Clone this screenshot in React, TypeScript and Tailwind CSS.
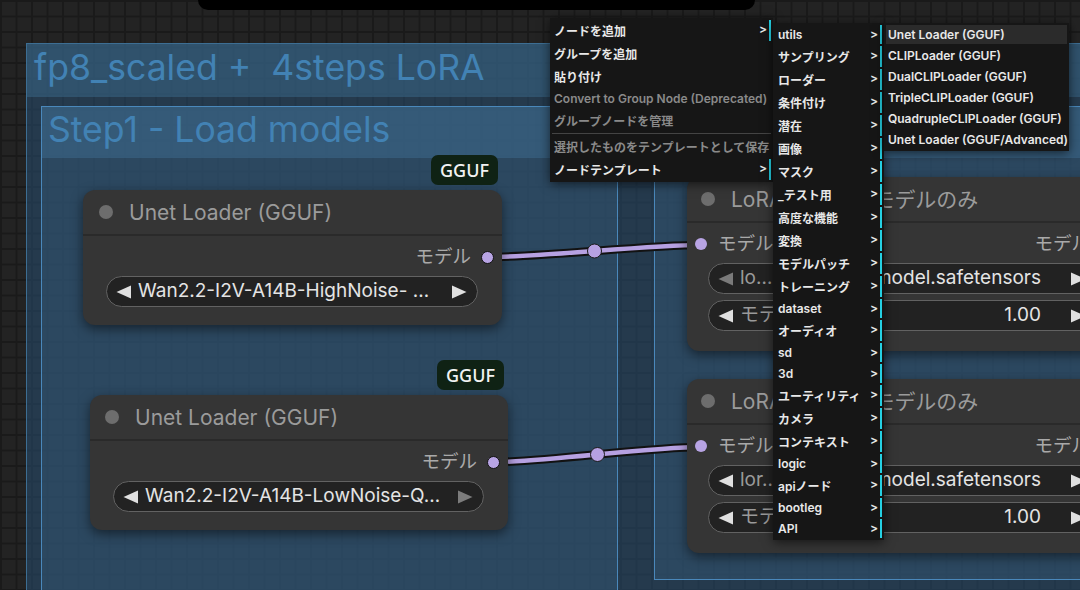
import React from "react";

const FONT = "[font-family:Inter,'Noto_Sans_CJK_JP',sans-serif]";

function Tri({ dir, color }: { dir: "l" | "r"; color: string }) {
  return (
    <svg width="15" height="14" viewBox="0 0 15 14" className="block shrink-0">
      <polygon
        points={dir === "l" ? "15,0.5 15,13.5 0.5,7" : "0,0.5 0,13.5 14.5,7"}
        fill={color}
      />
    </svg>
  );
}

function Node({
  pos,
  titleCls,
  title,
  children,
}: {
  pos: string;
  titleCls: string;
  title: string;
  children: React.ReactNode;
}) {
  return (
    <div
      className={`absolute ${pos} rounded-[12px] bg-[#353535] shadow-[0_4px_12px_rgba(0,0,0,0.5)]`}
    >
      <div
        className={`flex h-[46px] items-center border-b-2 border-[#2a2a2a] ${titleCls}`}
      >
        <div className="h-[14px] w-[14px] shrink-0 rounded-full bg-[#6d6d6d]" />
        <div className="ml-[16px] whitespace-nowrap text-[21px] leading-none text-[#9b9b9b]">
          {title}
        </div>
      </div>
      {children}
    </div>
  );
}

function Badge({ pos }: { pos: string }) {
  return (
    <div
      className={`absolute ${pos} flex h-[30px] w-[67px] items-center justify-center rounded-[7px] bg-[#0f2214] [font-family:'Noto_Sans',sans-serif] text-[18px] font-medium text-[#f2f2f2]`}
    >
      GGUF
    </div>
  );
}

function Entry({
  text,
  sub,
  disabled,
  hl,
  pl,
}: {
  text: string;
  sub?: boolean;
  disabled?: boolean;
  hl?: boolean;
  pl: string;
}) {
  return (
    <div
      className={`relative m-[2px] py-[2px] ${pl} whitespace-nowrap leading-[normal] ${
        disabled ? "text-[#8a8a8a]" : "text-[#e8e8e8]"
      } ${sub ? "border-r-2 border-[#25d0e3]" : ""} ${hl ? "bg-[#2b2b2b]" : ""}`}
    >
      {text}
      {sub && (
        <span className="absolute right-[2px] top-px leading-[normal] text-[#e8e8e8]">
          &gt;
        </span>
      )}
    </div>
  );
}

const categories: string[] = [
  "utils",
  "サンプリング",
  "ローダー",
  "条件付け",
  "潜在",
  "画像",
  "マスク",
  "_テスト用",
  "高度な機能",
  "変換",
  "モデルパッチ",
  "トレーニング",
  "dataset",
  "オーディオ",
  "sd",
  "3d",
  "ユーティリティ",
  "カメラ",
  "コンテキスト",
  "logic",
  "apiノード",
  "bootleg",
  "API",
];

const loaders = [
  "Unet Loader (GGUF)",
  "CLIPLoader (GGUF)",
  "DualCLIPLoader (GGUF)",
  "TripleCLIPLoader (GGUF)",
  "QuadrupleCLIPLoader (GGUF)",
  "Unet Loader (GGUF/Advanced)",
];

function UnetBody({ text, rightColor }: { text: string; rightColor: string }) {
  return (
    <div className="pb-[18px] pt-[6px]">
      <div className="relative flex h-[30px] items-center justify-end pr-[31px]">
        <span className="text-[18.5px] text-[#a9a9a9]">モデル</span>
        <div className="absolute right-[8px] top-[9px] h-[13px] w-[13px] rounded-full border-[1.5px] border-[#111] bg-[#b8a4e4]" />
      </div>
      <div className="ml-[23px] mr-[24px] mt-[4px] flex h-[31px] items-center rounded-full border border-[#626262] bg-[#222222] pl-[9px] pr-[10px]">
        <Tri dir="l" color="#e0e0e0" />
        <span className="ml-[7px] flex-1 whitespace-pre text-[19px] text-[#e4e4e4]">
          {text}
        </span>
        <Tri dir="r" color={rightColor} />
      </div>
    </div>
  );
}

function LoraBody({ label, leftColor }: { label: string; leftColor: string }) {
  return (
    <div className="pb-[20px] pt-[6px]">
      <div className="relative flex h-[30px] items-center justify-between pl-[31px] pr-[31px]">
        <div className="absolute left-[8px] top-[9px] h-[12px] w-[12px] rounded-full bg-[#b8a4e4]" />
        <span className="text-[18.5px] text-[#a9a9a9]">モデル</span>
        <span className="text-[18.5px] text-[#a9a9a9]">モデル</span>
      </div>
      <div className="ml-[21px] mt-[4px] flex h-[31px] w-[389px] items-center rounded-full border border-[#626262] bg-[#222222] pl-[9px] pr-[10px]">
        <Tri dir="l" color={leftColor} />
        <span className="ml-[7px] whitespace-nowrap text-[19px] text-[#9a9a9a]">{label}</span>
        <span className="flex-1" />
        <span className="mr-[30px] whitespace-nowrap text-[19px] text-[#e4e4e4]">
          _model.safetensors
        </span>
        <Tri dir="r" color="#e0e0e0" />
      </div>
      <div className="ml-[21px] mt-[6px] flex h-[31px] w-[389px] items-center rounded-full border border-[#626262] bg-[#222222] pl-[9px] pr-[10px]">
        <Tri dir="l" color="#e0e0e0" />
        <span className="ml-[7px] whitespace-nowrap text-[19px] text-[#9a9a9a]">モデル強度</span>
        <span className="flex-1" />
        <span className="mr-[30px] whitespace-nowrap text-[19px] text-[#e4e4e4]">1.00</span>
        <Tri dir="r" color="#e0e0e0" />
      </div>
    </div>
  );
}

export default function App() {
  return (
    <div
      className={`relative h-[590px] w-[1080px] overflow-hidden bg-[#232323] ${FONT} [background-image:linear-gradient(90deg,#1a1a1a_2px,transparent_2px),linear-gradient(180deg,#1a1a1a_2px,transparent_2px)] [background-size:15.5px_15.5px]`}
    >
      {/* outer group */}
      <div className="absolute left-[26px] top-[43px] h-[600px] w-[1100px] border border-[#3d6e93] bg-[#264969]/60">
        <div className="flex h-[53px] items-center whitespace-pre bg-[#3b6a8b]/50 pb-[6px] pl-[7px] text-[35.6px] leading-none text-[#4282b4]">
          fp8_scaled +  4steps LoRA
        </div>
      </div>

      {/* Step1 group */}
      <div className="absolute left-[41px] top-[106px] h-[500px] w-[577px] border border-[#4a88bb] bg-[#335673]/50">
        <div className="flex h-[51px] items-center whitespace-pre bg-[#3e6c90]/50 pb-[6px] pl-[6px] text-[35.6px] leading-none text-[#4282b4]">
          Step1 - Load models
        </div>
      </div>

      {/* right group */}
      <div className="absolute left-[654px] top-[106px] h-[474px] w-[500px] border border-[#4a88bb] bg-[#335673]/50">
        <div className="h-[51px] bg-[#3e6c90]/50" />
      </div>

      {/* links */}
      <svg className="absolute left-0 top-0" width="1080" height="590" viewBox="0 0 1080 590">
        <path d="M488 257 C541 257 648 245 701 245" stroke="#121212" strokeWidth="8.5" fill="none" />
        <path d="M488 257 C541 257 648 245 701 245" stroke="#b6a1e2" strokeWidth="4.5" fill="none" />
        <circle cx="594.5" cy="251" r="7" fill="#b6a1e2" stroke="#1a1a1a" strokeWidth="1" />
        <path d="M494 462 C546 462 648 447 701 447" stroke="#121212" strokeWidth="8.5" fill="none" />
        <path d="M494 462 C546 462 648 447 701 447" stroke="#b6a1e2" strokeWidth="4.5" fill="none" />
        <circle cx="597.5" cy="454.5" r="7" fill="#b6a1e2" stroke="#1a1a1a" strokeWidth="1" />
      </svg>

      {/* nodes */}
      <Node pos="left-[83px] top-[190px] w-[419px]" titleCls="pl-[16px]" title="Unet Loader (GGUF)">
        <UnetBody text="Wan2.2-I2V-A14B-HighNoise- …" rightColor="#e0e0e0" />
      </Node>
      <Badge pos="left-[431px] top-[155px]" />

      <Node pos="left-[90px] top-[395px] w-[418px]" titleCls="pl-[15px]" title="Unet Loader (GGUF)">
        <UnetBody text="Wan2.2-I2V-A14B-LowNoise-Q…" rightColor="#7c7c7c" />
      </Node>
      <Badge pos="left-[437px] top-[360px]" />

      <Node pos="left-[687px] top-[177px] w-[434px]" titleCls="pl-[14px]" title="LoRAローダー モデルのみ">
        <LoraBody label="lo…" leftColor="#7a7a7a" />
      </Node>
      <Node pos="left-[687px] top-[379px] w-[434px]" titleCls="pl-[14px]" title="LoRAローダー モデルのみ">
        <LoraBody label="lor…" leftColor="#e0e0e0" />
      </Node>

      {/* top bar */}
      <div className="absolute left-[198px] top-0 h-[10px] w-[557px] rounded-b-[12px] bg-black" />

      {/* context menu */}
      <div className="absolute left-[550px] top-[18px] w-[223px] bg-[#161616] text-[12px] font-semibold shadow-[0_2px_10px_rgba(0,0,0,0.6)]">
        <Entry text="ノードを追加" sub pl="pl-[2px]" />
        <Entry text="グループを追加" pl="pl-[2px]" />
        <Entry text="貼り付け" pl="pl-[2px]" />
        <Entry text="Convert to Group Node (Deprecated)" disabled pl="pl-[2px]" />
        <Entry text="グループノードを管理" disabled pl="pl-[2px]" />
        <div className="mx-[2px] my-[2px] h-px bg-[#444444]" />
        <Entry text="選択したものをテンプレートとして保存" disabled pl="pl-[2px]" />
        <Entry text="ノードテンプレート" sub pl="pl-[2px]" />
      </div>

      <div className="absolute left-[773px] top-[23px] w-[111px] bg-[#161616] text-[12px] font-semibold shadow-[0_2px_10px_rgba(0,0,0,0.6)]">
        {categories.map((t) => (
          <Entry key={t} text={t} sub pl="pl-[3px]" />
        ))}
      </div>

      <div className="absolute left-[884px] top-[23px] w-[185px] bg-[#161616] text-[12px] font-semibold shadow-[0_2px_10px_rgba(0,0,0,0.6)]">
        {loaders.map((t, i) => (
          <Entry key={t} text={t} hl={i === 0} pl="pl-[2px]" />
        ))}
      </div>
    </div>
  );
}
